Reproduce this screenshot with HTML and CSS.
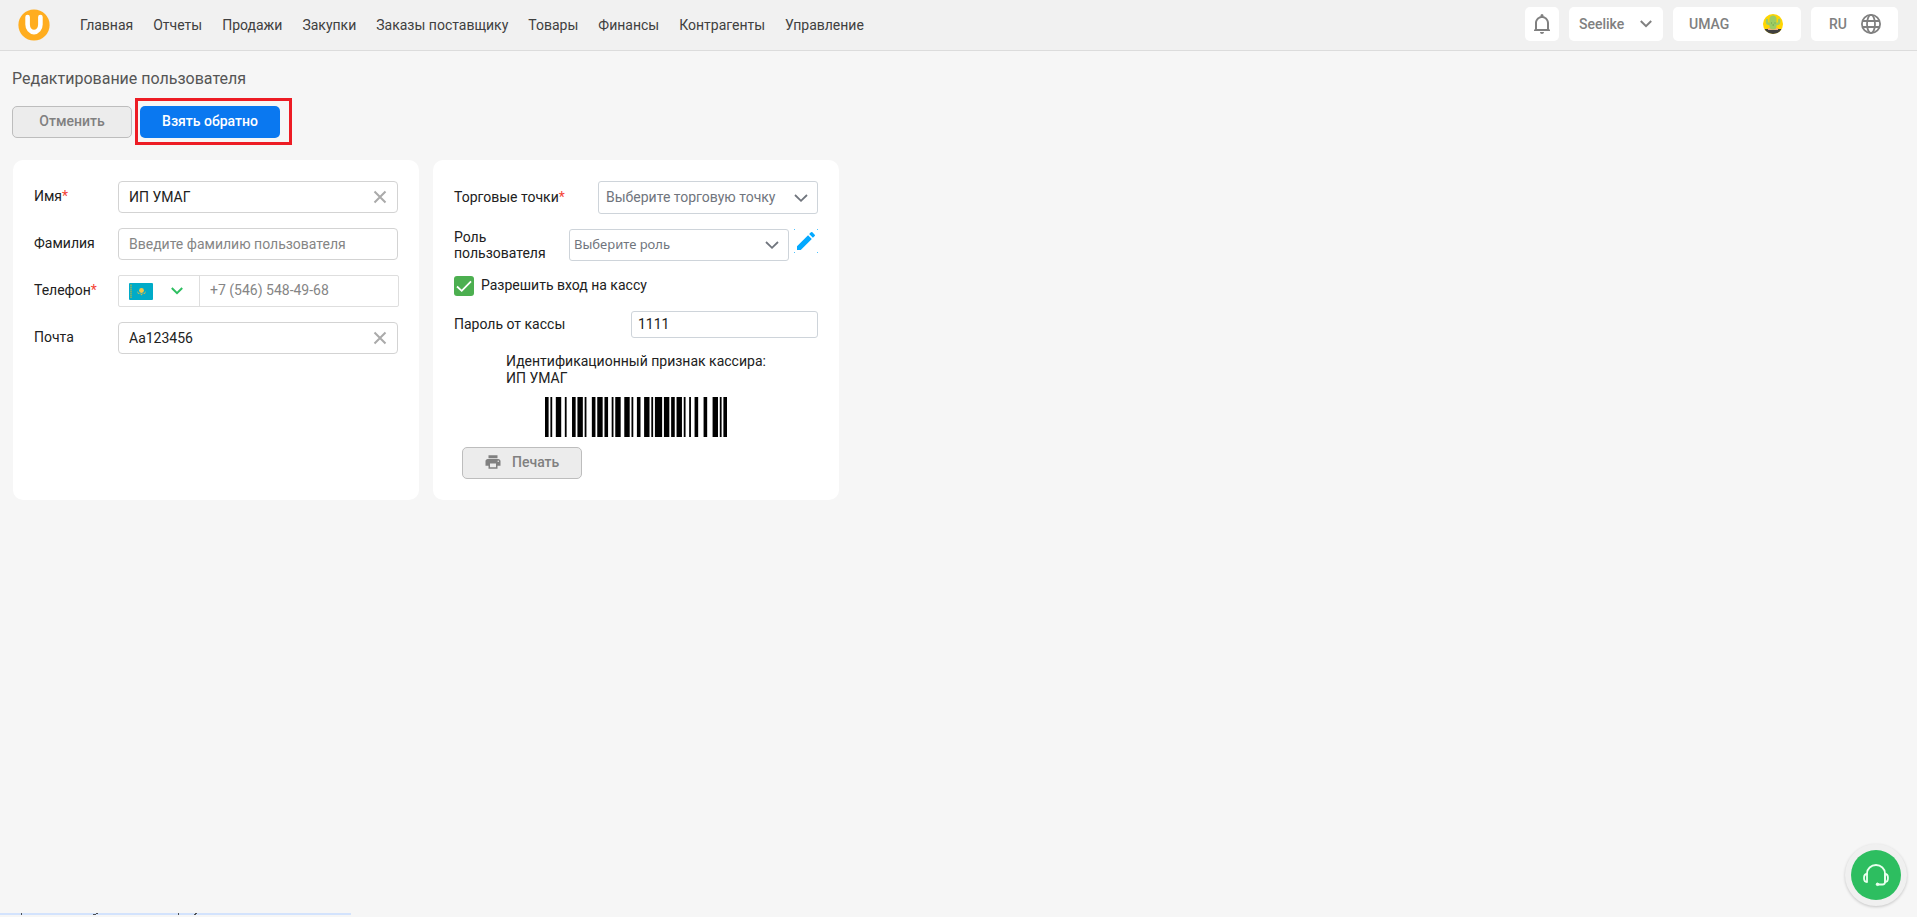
FILE: index.html
```html
<!DOCTYPE html>
<html lang="ru">
<head>
<meta charset="utf-8">
<meta name="viewport" content="width=device-width, initial-scale=1">
<title>Редактирование пользователя</title>
<link rel="stylesheet" href="styles.css">
</head>
<body>
<header class="topbar">
  <a class="logo" href="#" aria-label="UMAG">
    <svg width="32" height="32" viewBox="0 0 32 32"><circle cx="16" cy="16" r="15.6" fill="#ffad1f"/><path d="M9.6 8v7.500a6.400 7.600 0 0 0 12.800 0V8" fill="none" stroke="#fff" stroke-width="4.600" stroke-linecap="round"/></svg>
  </a>
  <nav class="nav">
    <a href="#">Главная</a><a href="#">Отчеты</a><a href="#">Продажи</a><a href="#">Закупки</a><a href="#">Заказы поставщику</a><a href="#">Товары</a><a href="#">Финансы</a><a href="#">Контрагенты</a><a href="#">Управление</a>
  </nav>
  <div class="tools">
    <button class="tool tool-bell" type="button" aria-label="Уведомления">
      <svg width="24" height="24" viewBox="0 0 24 24" fill="#808080"><path d="M10 20h4c0 1.100-.9 2-2 2s-2-.9-2-2zM19 17v-6c0-3.350-2.360-6.150-5.500-6.830V3.500a1.500 1.500 0 0 0-3 0v.67C7.360 4.850 5 7.650 5 11v6l-1 1v1h16v-1l-1-1zm-2 0H7v-6c0-2.760 2.240-5 5-5s5 2.240 5 5v6z"/></svg>
    </button>
    <button class="tool tool-store" type="button">Seelike
      <svg width="14" height="10" viewBox="0 0 14 10"><path d="M1.800 2l5.200 5.200L12.200 2" fill="none" stroke="#808080" stroke-width="2"/></svg>
    </button>
    <button class="tool tool-user" type="button">UMAG
      <svg width="20" height="20" viewBox="0 0 20 20"><clipPath id="avatar"><circle cx="10" cy="10" r="10"/></clipPath><g clip-path="url(#avatar)"><path fill="#ffd500" d="M0 0h20v20H0z"/><path fill="#404040" d="M0 15h20v5H0z"/><path fill="#f2ad73" d="M5 14h10v2H5z"/><rect x="6.500" y="1.500" width="7" height="14" rx="3.500" fill="#9ccc65"/><path d="M4 6v2q0 2 3 2M16.200 6v2q0 2-3 2" fill="none" stroke="#9ccc65" stroke-width="2.400" stroke-linecap="round"/><path d="M8 9h1M11.500 9h1M9.500 11h1.500" stroke="#6f9c4c"/></g></svg>
    </button>
    <button class="tool tool-lang" type="button">RU
      <svg width="20" height="20" viewBox="0 0 20 20" fill="none" stroke="#808080" stroke-width="1.800"><circle cx="10" cy="10" r="9.100"/><ellipse cx="10" cy="10" rx="4" ry="9.100"/><path d="M1.600 7h16.800M1.600 13h16.800"/></svg>
    </button>
  </div>
</header>

<main class="page">
  <h1 class="title">Редактирование пользователя</h1>
  <div class="actions">
    <button class="btn btn-plain" type="button">Отменить</button>
    <div class="marked"><button class="btn btn-primary" type="button">Взять обратно</button></div>
  </div>

  <form class="cards">
    <section class="card">
      <div class="row">
        <label for="name">Имя<i>*</i></label>
        <div class="field">
          <input class="input" id="name" type="text" value="ИП УМАГ">
          <button class="clear" type="button" aria-label="Очистить"><svg width="14" height="14" viewBox="0 0 14 14"><path d="M1.500 1.500l11 11m0-11l-11 11" stroke="#aaa" stroke-width="2"/></svg></button>
        </div>
      </div>
      <div class="row">
        <label for="surname">Фамилия</label>
        <div class="field"><input class="input" id="surname" type="text" placeholder="Введите фамилию пользователя"></div>
      </div>
      <div class="row">
        <label for="phone">Телефон<i>*</i></label>
        <div class="phone">
          <button class="country" type="button" aria-label="Казахстан">
            <svg width="24" height="17" viewBox="0 0 24 17"><rect width="24" height="17" rx="1" fill="#00abc8"/><path d="M2 1.500v14" stroke="#7fb06c" stroke-width="1.800" stroke-dasharray="1.500 .5"/><circle cx="12.500" cy="7.500" r="2.400" fill="#f5c645"/><path d="M8 8q1.500 2.500 4.500 2.800 3-.3 4.500-2.800l-1 3-2-.5-1.500 2-1.500-2-2 .5z" fill="#c5b955"/></svg>
            <svg width="14" height="10" viewBox="0 0 14 10"><path d="M1.800 2l5.200 5.200L12.200 2" fill="none" stroke="#2dbe60" stroke-width="2"/></svg>
          </button>
          <input id="phone" type="tel" placeholder="+7 (546) 548-49-68">
        </div>
      </div>
      <div class="row">
        <label for="mail">Почта</label>
        <div class="field">
          <input class="input" id="mail" type="text" value="Aa123456">
          <button class="clear" type="button" aria-label="Очистить"><svg width="14" height="14" viewBox="0 0 14 14"><path d="M1.500 1.500l11 11m0-11l-11 11" stroke="#aaa" stroke-width="2"/></svg></button>
        </div>
      </div>
    </section>

    <section class="card">
      <div class="line">
        <label for="store">Торговые точки<i>*</i></label>
        <div class="picker">
          <select id="store" class="select"><option>Выберите торговую точку</option></select>
          <svg width="14" height="10" viewBox="0 0 14 10"><path d="M1 2l6 5.800L13 2" fill="none" stroke="#70757d" stroke-width="1.800"/></svg>
        </div>
      </div>
      <div class="line line-role">
        <label for="role">Роль пользователя</label>
        <div class="picker">
          <select id="role" class="select select-role"><option>Выберите роль</option></select>
          <svg width="14" height="10" viewBox="0 0 14 10"><path d="M1 2l6 5.800L13 2" fill="none" stroke="#70757d" stroke-width="1.800"/></svg>
        </div>
        <button class="edit" type="button" aria-label="Изменить роль"><svg width="24" height="24" viewBox="0 0 24 24" fill="#03a9ff"><path d="M3 17.250V21h3.750L17.810 9.940l-3.750-3.750L3 17.250zM20.710 7.040a1 1 0 0 0 0-1.410l-2.340-2.340a1 1 0 0 0-1.410 0l-1.830 1.830 3.750 3.750 1.830-1.830z"/><path d="M0 0h1v1H0zM23 0h1v1h-1zM0 23h1v1H0zM23 23h1v1h-1z" opacity=".7"/></svg></button>
      </div>
      <label class="check">
        <span class="box"><input type="checkbox" checked><svg width="20" height="20" viewBox="0 0 20 20"><path d="M3 10.500l4.700 4.300L17 5.300" fill="none" stroke="#fff" stroke-width="1.800"/></svg></span>
        <span class="check-text">Разрешить вход на кассу</span>
      </label>
      <div class="line">
        <label for="pin">Пароль от кассы</label>
        <input class="pin" id="pin" type="text" value="1111">
      </div>
      <p class="cashier">Идентификационный признак кассира:<br>ИП УМАГ</p>
      <svg class="barcode" viewBox="0 0 101 40" preserveAspectRatio="none" role="img" aria-label="Штрихкод"><path d="M0 0h2v40H0zM3 0h1v40H3zM6 0h3v40H6zM11 0h1v40h-1zM15 0h2v40h-2zM18 0h3v40h-3zM22 0h1v40h-1zM26 0h2v40h-2zM29 0h3v40h-3zM33 0h2v40h-2zM37 0h1v40h-1zM39 0h3v40h-3zM44 0h3v40h-3zM48 0h1v40h-1zM51 0h2v40h-2zM55 0h3v40h-3zM59 0h1v40h-1zM61 0h4v40h-4zM66 0h3v40h-3zM70 0h2v40h-2zM73 0h3v40h-3zM77 0h1v40h-1zM80 0h1v40h-1zM83 0h2v40h-2zM88 0h2v40h-2zM93 0h3v40h-3zM97 0h1v40h-1zM99 0h2v40h-2z"/></svg>
      <button class="btn btn-plain print" type="button">
        <svg width="18" height="18" viewBox="0 0 24 24" fill="#808080"><path d="M19 8H5c-1.660 0-3 1.340-3 3v6h4v4h12v-4h4v-6c0-1.660-1.340-3-3-3zm-3 11H8v-5h8v5zm3-7a1 1 0 1 1 0-2 1 1 0 0 1 0 2zm-1-9H6v4h12V3z"/></svg>
        Печать
      </button>
    </section>
  </form>
</main>

<button class="support" type="button" aria-label="Поддержка">
  <svg width="50" height="50" viewBox="0 0 50 50" fill="none" stroke="#e9ffee" stroke-width="1.800" stroke-linecap="round" stroke-linejoin="round"><path d="M16 24v-.5a9 8.500 0 0 1 18 0v8.500a2.500 2.500 0 0 1-2.500 2.500H27"/><path d="M16 24c-2 0-3 1-3 4s1 4 3 4zM34 24c2 0 3 1 3 4s-1 4-3 4z"/><circle cx="26.500" cy="34.300" r="1.300" fill="#e9ffee" stroke-width="1"/></svg>
</button>
<div class="hint" aria-hidden="true">
  <svg width="351" height="2" viewBox="0 0 351 2"><path fill="#d3e3fd" d="M0 0h351v2H0z"/><path fill="#4d5156" d="M21 0h1v2h-1zM96 0h2v1h-2zM93 1h3v1h-3zM178 0h1v2h-1zM195 0h2v1h-2zM194 1h2v1h-2z"/></svg>
</div>
</body>
</html>
```
FILE: styles.css
```css
* { box-sizing: border-box; }

body {
  margin: 0;
  min-height: 100vh;
  background: #f6f6f6;
  color: #212121;
  font: 14px/16px Roboto, "Noto Sans", sans-serif;
}

button, input, select { font: inherit; color: inherit; margin: 0; }
button { cursor: pointer; border: 0; padding: 0; background: none; }
svg { display: block; flex: none; }

.topbar {
  display: flex;
  align-items: center;
  height: 51px;
  padding: 0 19px 0 18px;
  background: #f1f1f1;
  border-bottom: 1px solid #dcdcdc;
}
.nav { display: flex; gap: 20px; margin-left: 30px; }
.nav a { color: #404040; text-decoration: none; white-space: nowrap; }

.tools { display: flex; gap: 10px; margin: 0 0 2px auto; }
.tool {
  display: flex;
  align-items: center;
  justify-content: space-between;
  height: 34px;
  background: #fff;
  border-radius: 5px;
  color: #808080;
  font-weight: 500;
}
.tool-bell { width: 34px; justify-content: center; }
.tool-store { width: 94px; padding: 0 10px; }
.tool-user { width: 128px; padding: 0 18px 0 16px; }
.tool-lang { width: 87px; padding: 0 17px 0 18px; }

.page { padding: 18px 12px 0; }
.title { margin: 0; color: #555; font-size: 16px; line-height: 20px; font-weight: 400; }
.actions { display: flex; gap: 8px; margin-top: 17px; }
.btn { height: 32px; padding: 0 0 2px; border-radius: 5px; font-weight: 500; }
.btn-plain { width: 120px; background: #ececec; border: 1px solid #bdbdbd; color: #808080; }
.btn-primary { width: 140px; background: #0a78f0; color: #fff; }
.marked { position: relative; }
.marked::after {
  content: "";
  position: absolute;
  inset: -8px -12px -7px -5px;
  border: 3px solid #ed1c24;
  pointer-events: none;
}

.cards { display: flex; flex-wrap: wrap; gap: 14px; margin: 22px 0 0 1px; }
.card {
  display: flex;
  flex-direction: column;
  width: 406px;
  min-height: 340px;
  padding: 21px;
  background: #fff;
  border-radius: 10px;
}
.card i { color: #f44336; font-style: normal; }

.row { display: grid; grid-template-columns: 84px 1fr; margin-bottom: 15px; }
.row label { padding-top: 7px; }
.field { position: relative; }
.input {
  display: block;
  width: 100%;
  height: 32px;
  padding: 0 30px 0 10px;
  border: 1px solid #d3d3d3;
  border-radius: 4px;
  background: #fff;
}
input::placeholder { color: #858585; opacity: 1; }
.clear { position: absolute; right: 11px; top: 9px; }
.phone { display: flex; height: 32px; border: 1px solid #dedede; border-radius: 2px; }
.country { display: flex; align-items: center; justify-content: space-between; width: 81px; padding: 0 15px 0 10px; border-right: 1px solid #dedede; }
.phone input { flex: 1; min-width: 0; border: 0; padding: 0 10px 2px; background: none; }

.line { display: flex; align-items: center; justify-content: space-between; }
.line label { padding-bottom: 2px; }
.line-role { align-items: flex-start; margin-top: 15px; }
.line-role label { flex: none; width: 110px; padding: 0; }
.line-role .picker { margin-left: auto; margin-right: 5px; }
.picker { display: grid; align-items: center; width: 220px; }
.picker > * { grid-area: 1 / 1; }
.picker svg { justify-self: end; margin-right: 10px; pointer-events: none; }
.select {
  appearance: none;
  width: 100%;
  height: 33px;
  padding: 0 28px 2px 7px;
  border: 1px solid #ced4da;
  border-radius: 3px;
  background: #fff;
  color: #70757d;
}
.select-role { height: 32px; padding-left: 4px; font-family: "Noto Sans", sans-serif; font-size: 13px; }
.check { display: flex; align-items: center; gap: 7px; margin: 15px 0; }
.check-text { padding-bottom: 2px; }
.box { display: grid; }
.box > * { grid-area: 1 / 1; pointer-events: none; }
.box input { appearance: none; width: 20px; height: 20px; border-radius: 3px; background: #4caf50; }
.pin { width: 187px; height: 27px; padding: 0 6px 2px; border: 1px solid #ced4da; border-radius: 3px; }
.cashier { align-self: center; width: 260px; margin: 15px 0 10px; line-height: 17px; white-space: nowrap; }
.barcode { align-self: center; width: 182px; height: 40px; }
.print { display: flex; align-items: center; gap: 10px; margin: 10px 0 0 8px; padding-left: 21px; }

.support {
  position: fixed;
  right: 10px;
  bottom: 11px;
  display: grid;
  place-items: center;
  width: 62px;
  height: 62px;
  border-radius: 50%;
  background: #f0f0f0;
  box-shadow: 0 1px 3px rgba(0, 0, 0, .2);
}
.support svg { border-radius: 50%; background: #2dbe60; }
.hint { position: fixed; left: 0; bottom: 2px; }
```
